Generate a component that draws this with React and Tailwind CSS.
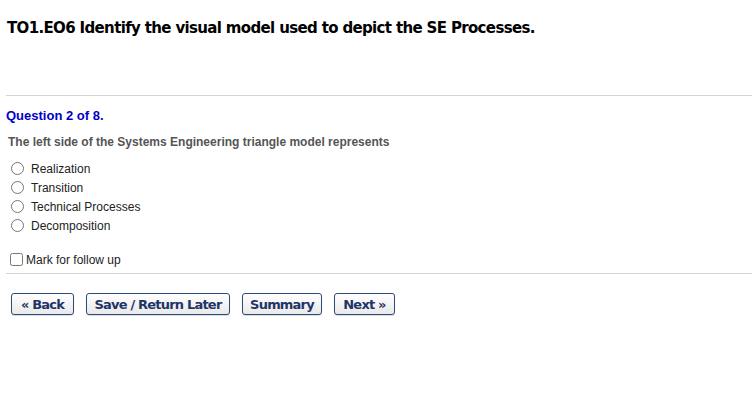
import React from "react";

function Btn({ children, w }) {
  return (
    <button
      type="button"
      className={`${w} h-[22px] px-0 rounded-[3px] border border-[#2c4a7c] bg-gradient-to-b from-white to-[#e9e9e9] text-[13px] tracking-[-0.8px] font-bold leading-none text-[#1f3468] [font-family:'DejaVu_Sans',Verdana,sans-serif] shadow-[0_1px_1px_rgba(0,0,0,0.15)] flex items-center justify-center whitespace-nowrap`}
    >
      {children}
    </button>
  );
}

export default function App() {
  const options = ["Realization", "Transition", "Technical Processes", "Decomposition"];
  return (
    <div className="w-[752px] h-[400px] bg-white [font-family:'Liberation_Sans',Arial,sans-serif]">
      <div className="pl-[7px] pt-[19px]">
        <h1 className="text-[15px] leading-[18px] tracking-[-0.65px] font-bold text-black [font-family:'DejaVu_Sans',Verdana,sans-serif]">
          TO1.EO6 Identify the visual model used to depict the SE Processes.
        </h1>
      </div>
      <div className="ml-[6px] mt-[58px] h-px bg-[#d4d4d4]" />
      <div className="pl-[6px] pt-[12px]">
        <div className="text-[13px] leading-[15px] font-bold text-[#0000cc]">Question 2 of 8.</div>
      </div>
      <div className="pl-[8px] pt-[12px]">
        <div className="text-[12px] leading-[14px] font-bold text-[#555555]">
          The left side of the Systems Engineering triangle model represents
        </div>
      </div>
      <div className="pl-[6px] pt-[10px] flex flex-col">
        {options.map((o) => (
          <label key={o} className="h-[19px] flex items-center text-[12px] text-[#222222]">
            <input type="radio" name="q" className="m-0 ml-[5px] mr-[7px] w-[13px] h-[13px]" />
            <span>{o}</span>
          </label>
        ))}
      </div>
      <div className="pl-[6px] pt-[15px]">
        <label className="h-[19px] flex items-center text-[12px] text-[#222222]">
          <input type="checkbox" className="m-0 ml-[4px] mr-[3px] w-[13px] h-[13px]" />
          <span>Mark for follow up</span>
        </label>
      </div>
      <div className="ml-[6px] mt-[4px] h-px bg-[#d4d4d4]" />
      <div className="pl-[11px] pt-[19px] flex gap-[12px]">
        <Btn w="w-[63px]">« Back</Btn>
        <Btn w="w-[144px]">Save / Return Later</Btn>
        <Btn w="w-[80px]">Summary</Btn>
        <Btn w="w-[61px]">Next »</Btn>
      </div>
    </div>
  );
}
